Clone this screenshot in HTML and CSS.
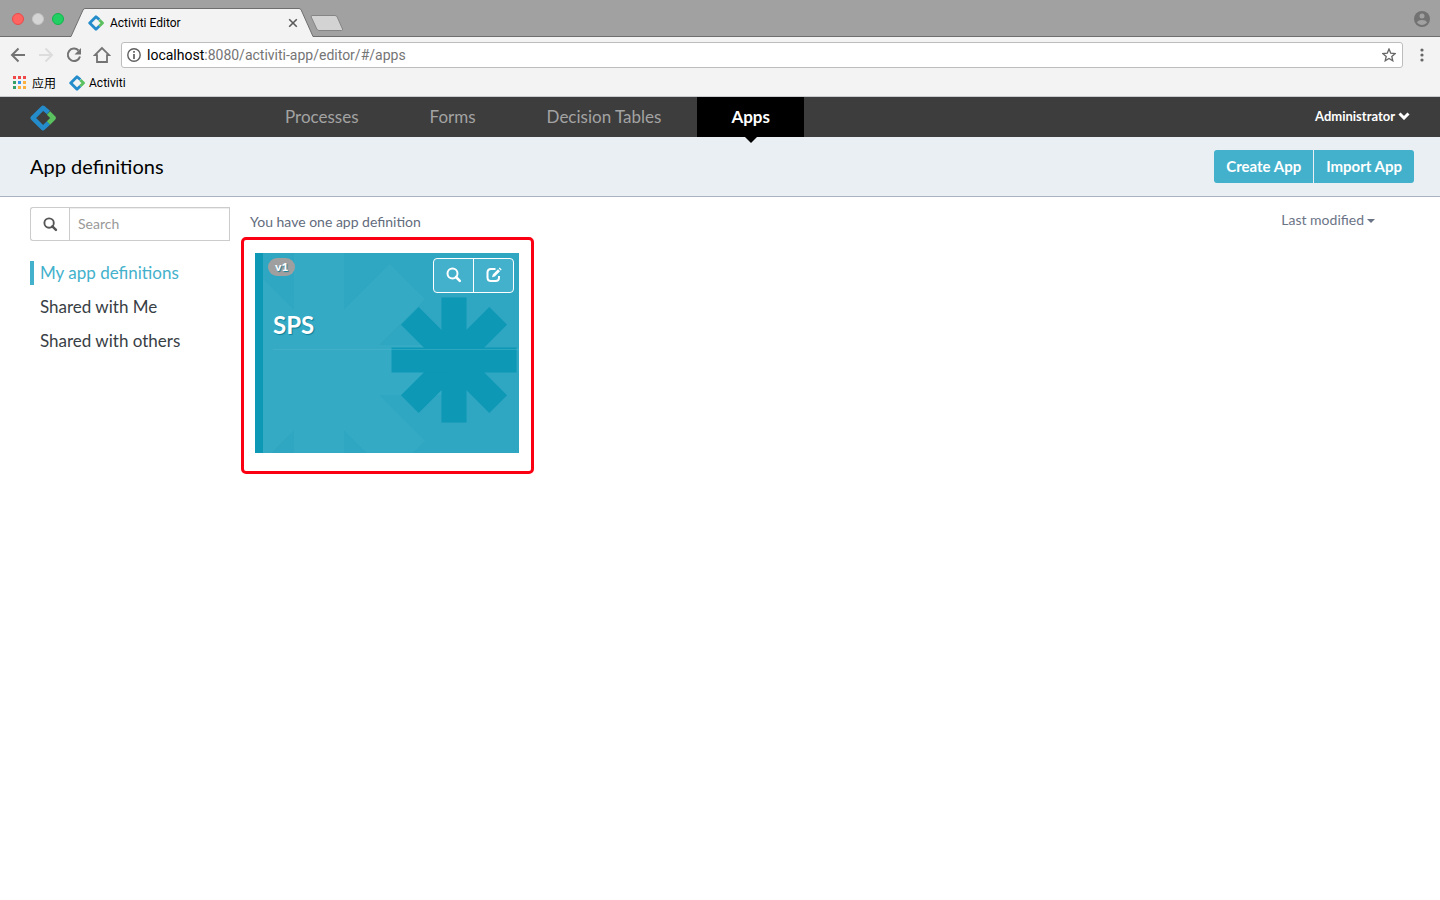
FILE: index.html
```html
<!DOCTYPE html>
<html lang="en">
<head>
<meta charset="utf-8">
<title>Activiti Editor</title>
<link rel="stylesheet" href="styles.css">
</head>
<body>
<svg class="defs" width="0" height="0" aria-hidden="true">
  <symbol id="logo" viewBox="0 0 26 26">
    <path d="M18.500 7.500 13 2.800 2.800 13 13 23.200 18.500 18" fill="none" stroke="#248ccb" stroke-width="4.600" stroke-linejoin="round"/>
    <path d="M18.500 8 23.500 13 18.500 18" fill="none" stroke="#5bc05f" stroke-width="4.600" stroke-linejoin="round"/>
  </symbol>
  <symbol id="search" viewBox="0 0 16 16">
    <circle cx="6.500" cy="6.500" r="5" fill="none" stroke="currentColor" stroke-width="2"/>
    <path d="M10 10 13.800 13.800" stroke="currentColor" stroke-width="2.600" stroke-linecap="round"/>
  </symbol>
  <symbol id="star8" viewBox="-63 -63 126 126">
    <path d="M-12.500-62.500h25v125h-25z"/>
    <path d="M-12.500-62.500h25v125h-25z" transform="rotate(45)"/>
    <path d="M-12.500-62.500h25v125h-25z" transform="rotate(90)"/>
    <path d="M-12.500-62.500h25v125h-25z" transform="rotate(135)"/>
  </symbol>
</svg>

<header class="browser">
  <div class="tabstrip">
    <div class="lights"><span class="light red"></span><span class="light gray"></span><span class="light green"></span></div>
    <div class="tab">
      <svg class="tab-shape" viewBox="0 0 244 29" aria-hidden="true"><path d="M0 28.500L12 2Q12.700.500 14 .500H228Q229.500.500 230.200 2L242 28.500V29H0z" fill="#f3f3f3"/><path d="M0 28.500L12 2Q12.700.500 14 .500H228Q229.500.500 230.200 2L242 28.500H244" fill="none" stroke="#6e6e6e"/></svg>
      <svg class="favicon"><use href="#logo"/></svg>
      <span class="tab-title">Activiti Editor</span>
      <button class="bare tab-close" aria-label="Close tab"><svg width="10" height="10" viewBox="0 0 10 10"><path d="M1.200 1.200l7.600 7.600m0-7.600l-7.600 7.600" stroke="#5a5a5a" stroke-width="1.600"/></svg></button>
    </div>
    <button class="bare newtab" aria-label="New tab"><svg width="34" height="17" viewBox="0 0 34 17"><path d="M2 .500H25Q26.500.500 27.200 2L32.500 14Q33 15.500 31.500 15.500H9Q7.500 15.500 6.800 14L1.200 2Q.800.500 2 .500z" fill="#d3d3d3" stroke="#858585"/></svg></button>
    <svg class="profile" viewBox="0 0 16 16"><circle cx="8" cy="8" r="8" fill="#727272"/><circle cx="8" cy="5" r="2.500" fill="#a1a1a1"/><path d="M3 11.500C4 8.200 12 8.200 13 11.500 10.500 14.700 5.500 14.700 3 11.500z" fill="#a1a1a1"/></svg>
  </div>
  <div class="toolbar">
    <button class="bare tool" aria-label="Back"><svg width="16" height="16" viewBox="0 0 16 16"><path d="M15 8H2M8.500 1.500 2 8l6.500 6.500" fill="none" stroke="#737373" stroke-width="2"/></svg></button>
    <button class="bare tool" aria-label="Forward"><svg width="16" height="16" viewBox="0 0 16 16"><path d="M1 8h13M7.500 1.500 14 8l-6.500 6.500" fill="none" stroke="#dcdcdc" stroke-width="2"/></svg></button>
    <button class="bare tool" aria-label="Reload"><svg width="16" height="16" viewBox="0 0 16 16"><path d="M14 9.500A6.200 6.200 0 1 1 12.500 3.500" fill="none" stroke="#737373" stroke-width="2"/><path d="M15 1v6.500H8.500z" fill="#737373"/></svg></button>
    <button class="bare tool" aria-label="Home"><svg width="18" height="18" viewBox="0 0 18 18"><path d="M9 2 1.800 9.200H4V16h10V9.200h2.200z" fill="none" stroke="#737373" stroke-width="1.800"/></svg></button>
    <div class="address">
      <svg width="14" height="14" viewBox="0 0 14 14"><circle cx="7" cy="7" r="6.200" fill="none" stroke="#5f5f5f" stroke-width="1.400"/><path d="M7 3v1.700M7 6v5" stroke="#5f5f5f" stroke-width="1.700"/></svg>
      <span class="url"><b>localhost</b>:8080/activiti-app/editor/#/apps</span>
      <button class="bare fav" aria-label="Bookmark"><svg width="14" height="14" viewBox="0 0 14 14"><path d="M7 1l1.700 4.100 4.500.400-3.400 2.900 1 4.400L7 10.500l-3.800 2.300 1-4.400L.800 5.500l4.500-.400z" fill="none" stroke="#666" stroke-width="1.300"/></svg></button>
    </div>
    <button class="bare menu" aria-label="Menu"><svg width="4" height="14" viewBox="0 0 4 14" fill="#666"><circle cx="2" cy="2" r="1.600"/><circle cx="2" cy="7" r="1.600"/><circle cx="2" cy="12" r="1.600"/></svg></button>
  </div>
  <nav class="bookmarks">
    <a href="#"><svg width="13" height="13" viewBox="0 0 13 13"><path d="M0 0h3v3H0zM5 0h3v3H5zM10 0h3v3h-3z" fill="#f04848"/><path d="M0 5h3v3H0zM0 10h3v3H0z" fill="#34a068"/><path d="M5 5h3v3H5z" fill="#3494ec"/><path d="M10 5h3v3h-3zM5 10h3v3H5zM10 10h3v3h-3z" fill="#fbb040"/></svg>应用</a>
    <a href="#"><svg class="bm-logo"><use href="#logo"/></svg>Activiti</a>
  </nav>
</header>

<div class="navbar">
  <a class="brand" href="#" aria-label="Activiti"><svg width="26" height="26"><use href="#logo"/></svg></a>
  <nav class="mainnav">
    <a href="#">Processes</a><a href="#">Forms</a><a href="#">Decision Tables</a><a href="#" class="active">Apps</a>
  </nav>
  <button class="bare account">Administrator <svg width="12" height="8" viewBox="0 0 12 8"><path d="M1.500 1.500 6 6l4.500-4.500" fill="none" stroke="#fff" stroke-width="3"/></svg></button>
</div>

<div class="subheader">
  <h1>App definitions</h1>
  <div class="actions"><button>Create App</button><button>Import App</button></div>
</div>

<main class="content">
  <aside class="side">
    <div class="searchbox">
      <label for="q" aria-label="Search"><svg width="15" height="15"><use href="#search"/></svg></label>
      <input id="q" type="text" placeholder="Search">
    </div>
    <ul class="filters">
      <li><a href="#" class="current">My app definitions</a></li>
      <li><a href="#">Shared with Me</a></li>
      <li><a href="#">Shared with others</a></li>
    </ul>
  </aside>
  <section class="list">
    <div class="listhead">
      <span>You have one app definition</span>
      <button class="bare sort">Last modified <i class="caret"></i></button>
    </div>
    <div class="marked">
      <article class="card">
        <svg class="art faint"><use href="#star8"/></svg>
        <svg class="art strong"><use href="#star8"/></svg>
        <div class="cardtop">
          <span class="badge">v1</span>
          <div class="cardbtns">
            <button aria-label="View"><svg width="16" height="16"><use href="#search"/></svg></button>
            <button aria-label="Edit"><svg width="16" height="16" viewBox="0 0 16 16"><path d="M9.500 2H5Q1.500 2 1.500 5.500v5Q1.500 14 5 14h4.500Q13 14 13 10.500V9" fill="none" stroke="#fff" stroke-width="2"/><path d="M6 10.300 6.800 7.500 12 2.300l2 2-5.200 5.200zM12.800 1.500l.900-.900 2 2-.900.900z" fill="#fff"/></svg></button>
          </div>
        </div>
        <h2>SPS</h2>
      </article>
    </div>
  </section>
</main>
</body>
</html>
```

FILE: styles.css
```css
* { box-sizing: border-box; }
body { margin: 0; background: #fff; font-family: Lato, sans-serif; color: #384045; }
a { color: inherit; text-decoration: none; }
.defs { position: absolute; }
svg { display: block; flex: none; }
button { font-family: inherit; cursor: pointer; }
.bare { border: 0; padding: 0; background: none; }

/* Browser window */
.browser { font-family: Roboto, "Noto Sans CJK SC", sans-serif; background: #f3f3f3; border-bottom: 1px solid #c9cccc; }
.tabstrip { display: flex; align-items: flex-end; height: 37px; background: #a1a1a1; border-bottom: 1px solid #6e6e6e; }
.lights { display: flex; gap: 8px; padding: 0 0 11px 12px; }
.light { width: 12px; height: 12px; border-radius: 50%; }
.red { background: #ff6461; border: 1px solid #e94b4b; }
.gray { background: #d5d5d5; border: 1px solid #c4c4c4; }
.green { background: #22cf62; border: 1px solid #12b54b; }
.tab { position: relative; display: flex; align-items: center; width: 244px; height: 29px; margin: 0 0 -1px 7px; padding: 0 17px; }
.tab-shape { position: absolute; inset: 0; width: 100%; height: 100%; }
.favicon { position: relative; width: 16px; height: 16px; }
.tab-title { position: relative; flex: 1; padding-left: 6px; font-size: 12px; color: #000; }
.tab-close { position: relative; }
.newtab { margin: 0 0 4px -5px; }
.profile { width: 16px; height: 16px; margin: 0 10px 9px auto; }
.toolbar { display: flex; align-items: center; height: 36px; padding: 0 13px 0 4px; }
.tool { display: flex; align-items: center; justify-content: center; width: 28px; height: 28px; }
.address { display: flex; flex: 1; align-items: center; gap: 6px; height: 26px; margin-left: 5px; padding: 0 6px 0 5px; background: #fff; border: 1px solid #bdbdbd; border-radius: 3px; }
.url { flex: 1; font-size: 14px; color: #757575; }
.url b { font-weight: 400; color: #000; }
.menu { margin-left: 14px; padding: 0 3px; }
.bookmarks { display: flex; gap: 13px; height: 23px; padding: 0 13px 4px; align-items: center; font-size: 12px; color: #000; }
.bookmarks a { display: flex; align-items: center; gap: 6px; }
.bookmarks a + a { gap: 4px; }
.bm-logo { width: 16px; height: 16px; }

/* Application header */
.navbar { display: flex; height: 40px; padding: 0 30px; background: #3d3d3d; }
.brand { width: 220px; padding-top: 8px; }
.mainnav { display: flex; flex: 1; gap: 1px; font-size: 17px; line-height: 40px; color: #a3a3a3; }
.mainnav a { padding: 0 35px; }
.mainnav .active { position: relative; padding: 0 34px; background: #000; color: #fff; font-weight: 700; }
.mainnav .active::after { content: ""; position: absolute; top: 100%; left: 50%; margin-left: -6px; border: 6px solid transparent; border-top-color: #000; border-bottom: 0; }
.account { display: flex; align-items: center; gap: 3px; padding-bottom: 2px; font-size: 13px; font-weight: 700; color: #fff; }
.subheader { display: flex; align-items: center; justify-content: space-between; height: 60px; padding: 0 26px 0 30px; background: #e9eff2; border-bottom: 1px solid #aab3c1; }
h1 { margin: 0; padding-bottom: 2px; font-size: 20px; font-weight: 400; color: #000; }
.actions { display: flex; gap: 1px; }
.actions button { height: 33px; padding: 0 12px 2px; border: 0; background: #43b1cc; color: #fff; font-size: 15px; font-weight: 700; }
.actions button:first-child { border-radius: 3px 0 0 3px; }
.actions button:last-child { border-radius: 0 3px 3px 0; }

/* App list */
.content { display: flex; padding: 10px 30px; }
.side { width: 200px; }
.searchbox { display: flex; height: 34px; }
.searchbox label { display: flex; align-items: center; justify-content: center; width: 39px; border: 1px solid #ccc; border-right: 0; border-radius: 3px 0 0 3px; color: #555; }
.searchbox input { flex: 1; min-width: 0; padding: 0 8px 2px; border: 1px solid #ccc; border-radius: 0; box-shadow: inset 0 1px 1px #00000013; font: 14px Lato, sans-serif; color: #555; }
.searchbox input::placeholder { color: #999; }
.filters { display: grid; gap: 10px; margin: 20px 0 0; padding: 0; list-style: none; font-size: 17px; line-height: 24px; }
.filters a { display: block; padding-left: 6px; border-left: 4px solid transparent; }
.filters .current { border-color: #43b1cc; color: #43b1cc; }
.list { flex: 1; padding-left: 11px; }
.listhead { display: flex; justify-content: space-between; height: 30px; padding: 0 35px 0 9px; font-size: 14px; line-height: 30px; color: #636c7c; }
.sort { display: flex; align-items: center; gap: 3px; height: 26px; padding-bottom: 1px; font-size: 14px; color: #6b7486; }
.caret { margin-top: 3px; border: 4px solid transparent; border-top-color: currentColor; border-bottom: 0; }
.marked { width: 293px; padding: 13px 11px 18px; border: 3px solid #fb0013; border-radius: 5px; }
.card { position: relative; overflow: hidden; width: 264px; height: 200px; padding: 5px 5px 0; background: #2fa6c2; border-left: 8px solid #0d98b5; color: #fff; }
.art { position: absolute; }
.strong { width: 126px; height: 126px; left: 128px; top: 44px; fill: #0d98b5; }
.faint { width: 252px; height: 252px; left: -70px; top: -9px; fill: #35aac5; }
.cardtop { position: relative; display: flex; align-items: flex-start; justify-content: space-between; }
.badge { padding: 0 7px; border-radius: 9px; background: #9f9f9f; font-size: 12px; font-weight: 900; line-height: 18px; text-shadow: 1px 1px 1px #0d7f98; }
.cardbtns { display: flex; border: 1px solid #fff; border-radius: 4px; background: #43b1cc; }
.cardbtns button { display: flex; align-items: center; justify-content: center; width: 39px; height: 33px; padding: 0 0 1px; border: 0; background: none; color: #fff; }
.cardbtns button + button { width: 40px; border-left: 1px solid #fff; }
h2 { position: relative; margin: 12px -5px 0 5px; padding: 4px 0 8px; border-bottom: 1px solid #4db4cc80; font-size: 24px; line-height: 32px; font-weight: 700; text-shadow: 1px 1px 1px #0d7f98; }
```
